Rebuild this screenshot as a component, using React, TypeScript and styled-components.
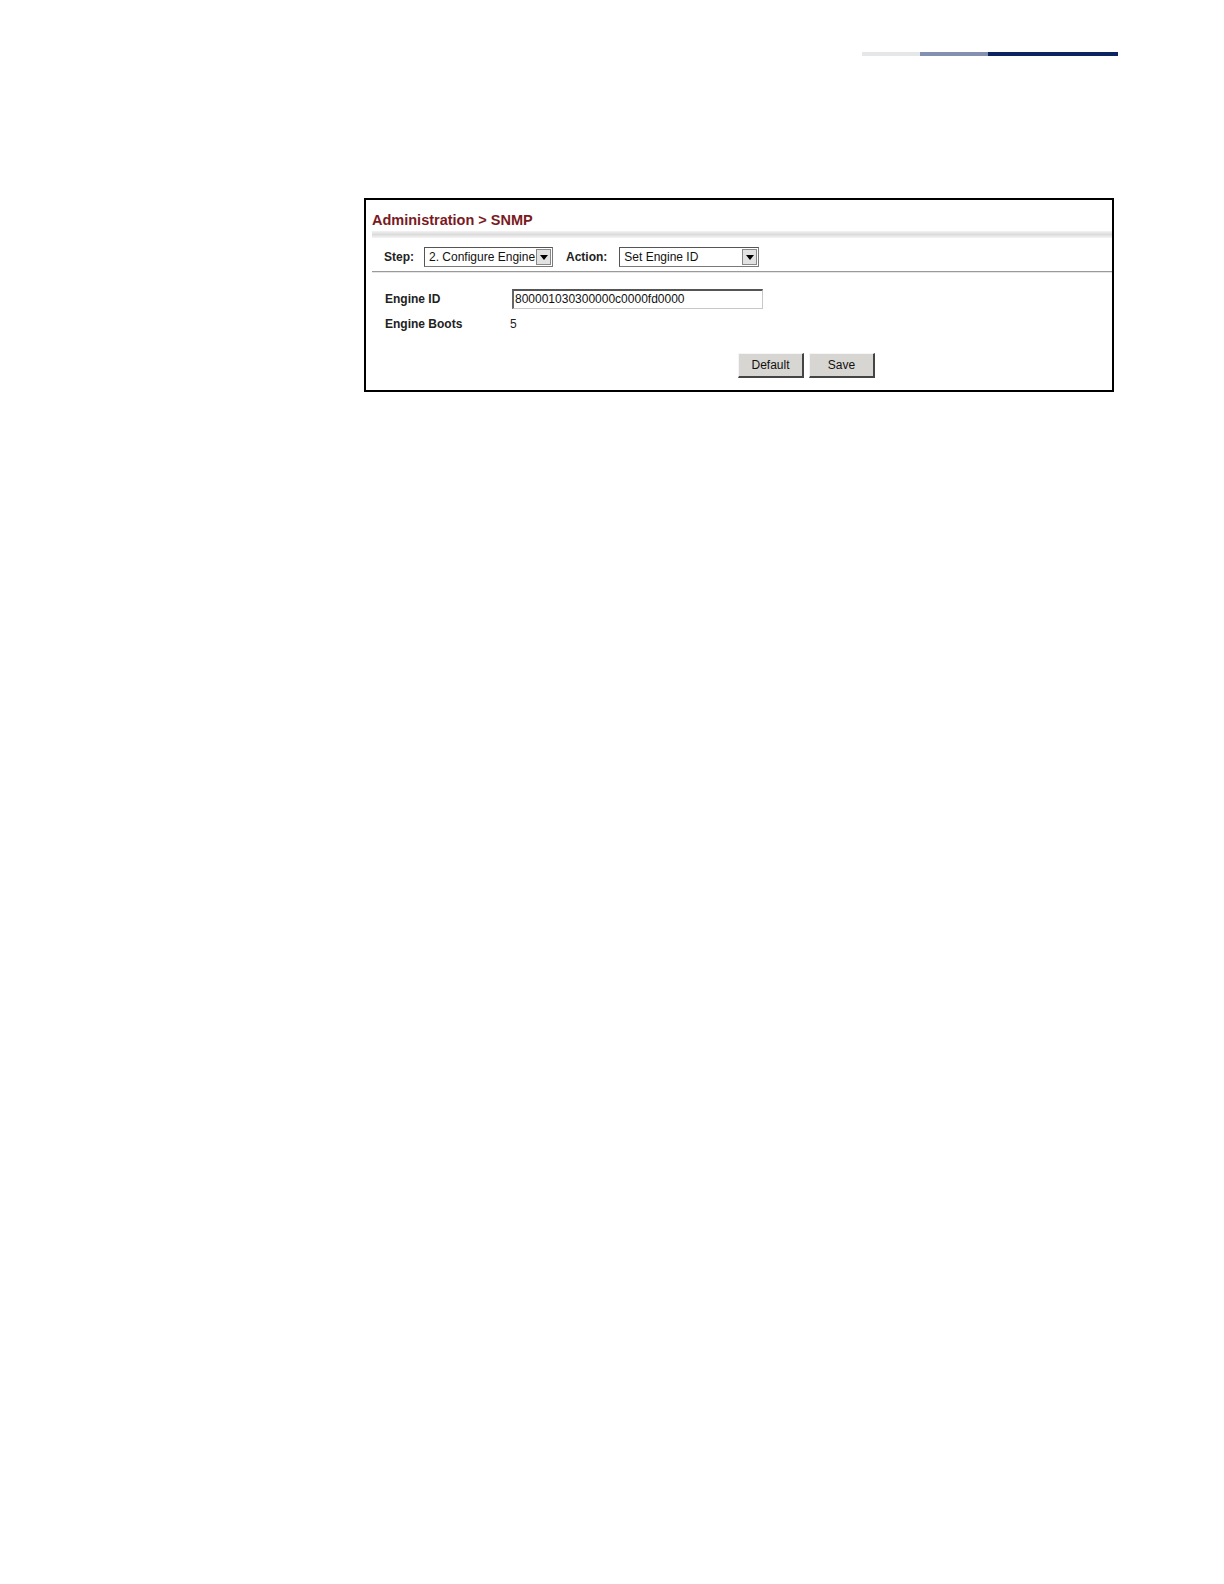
import styled, { createGlobalStyle } from "styled-components";

const Global = createGlobalStyle`
  html, body { margin: 0; padding: 0; background: #fff; overflow: hidden; }
  body { font-family: "Liberation Sans", Arial, sans-serif; }
`;

const Page = styled.div`
  background: #fff;
  padding-bottom: 40px;
`;

const HeaderBar = styled.div`
  display: flex;
  padding: 52px 0 0 862px;
`;

const BarSeg = styled.div<{ $w: number; $c: string }>`
  width: ${p => p.$w}px;
  height: 4px;
  background: ${p => p.$c};
`;

const Panel = styled.div`
  margin: 142px 0 0 364px;
  width: 746px;
  height: 190px;
  border: 2px solid #000;
  display: flex;
  flex-direction: column;
`;

const Title = styled.div`
  padding: 12px 0 0 6px;
  height: 19px;
  font-size: 14.5px;
  font-weight: bold;
  color: #7a1a1f;
`;

const Band = styled.div`
  margin-left: 6px;
  height: 7px;
  background: linear-gradient(#f2f2f2, #dcdcdc 50%, #f4f4f4);
`;

const Toolbar = styled.div`
  display: flex;
  align-items: center;
  height: 20px;
  margin-top: 9px;
  padding-left: 18px;
  font-size: 12px;
`;

const Label = styled.span<{ $gap?: number }>`
  font-weight: bold;
  color: #222;
  margin-right: ${p => p.$gap ?? 10}px;
`;

const Select = styled.div<{ $w: number }>`
  width: ${p => p.$w}px;
  height: 20px;
  box-sizing: border-box;
  border: 1px solid #7a7a7a;
  border-top-color: #555;
  border-left-color: #555;
  display: flex;
  align-items: center;
  padding-left: 4px;
  font-size: 12px;
  color: #111;
  margin-right: 13px;
  background: #fff;
`;

const SelectText = styled.span`
  flex: 1;
  white-space: nowrap;
  overflow: hidden;
`;

const Arrow = styled.div`
  width: 15px;
  height: 16px;
  margin-right: 1px;
  background: #e2e2e2;
  border: 1px solid #888;
  box-sizing: border-box;
  display: flex;
  align-items: center;
  justify-content: center;
  flex-shrink: 0;
`;

const Divider = styled.div`
  margin: 4px 0 0 6px;
  height: 1px;
  background: #9a9a9a;
  border-bottom: 1px solid #e6e6e6;
`;

const Form = styled.div`
  display: flex;
  flex-direction: column;
  padding: 15px 0 0 19px;
  font-size: 12px;
`;

const Row = styled.div<{ $h: number }>`
  display: flex;
  align-items: center;
  height: ${p => p.$h}px;
`;

const FieldLabel = styled.div`
  width: 127px;
  font-weight: bold;
  color: #222;
`;

const Input = styled.div`
  width: 251px;
  height: 20px;
  box-sizing: border-box;
  border: 1px solid #c8c8c8;
  border-top: 2px solid #555;
  border-left: 2px solid #666;
  padding-left: 1px;
  display: flex;
  align-items: center;
  font-size: 12px;
  color: #111;
`;

const Value = styled.div`
  margin-left: -2px;
  color: #222;
`;

const Buttons = styled.div`
  display: flex;
  gap: 5px;
  padding: 14px 0 0 372px;
`;

const Button = styled.div`
  width: 66px;
  height: 25px;
  box-sizing: border-box;
  background: #d8d6d2;
  border: 1px solid #f5f5f5;
  border-right: 2px solid #444;
  border-bottom: 2px solid #444;
  display: flex;
  align-items: center;
  justify-content: center;
  font-size: 12px;
  color: #111;
`;

const DownArrow = () => (
  <svg width="8" height="5" viewBox="0 0 8 5">
    <path d="M0 0 H8 L4 5 Z" fill="#000" />
  </svg>
);

export default function App() {
  return (
    <Page>
      <Global />
      <HeaderBar>
        <BarSeg $w={58} $c="#e6e7e9" />
        <BarSeg $w={68} $c="#8490b0" />
        <BarSeg $w={130} $c="#0c2460" />
      </HeaderBar>
      <Panel>
        <Title>Administration &gt; SNMP</Title>
        <Band />
        <Toolbar>
          <Label>Step:</Label>
          <Select $w={129}>
            <SelectText>2. Configure Engine</SelectText>
            <Arrow><DownArrow /></Arrow>
          </Select>
          <Label $gap={12}>Action:</Label>
          <Select $w={140}>
            <SelectText>Set Engine ID</SelectText>
            <Arrow><DownArrow /></Arrow>
          </Select>
        </Toolbar>
        <Divider />
        <Form>
          <Row $h={21}>
            <FieldLabel>Engine ID</FieldLabel>
            <Input>800001030300000c0000fd0000</Input>
          </Row>
          <Row $h={30}>
            <FieldLabel>Engine Boots</FieldLabel>
            <Value>5</Value>
          </Row>
        </Form>
        <Buttons>
          <Button>Default</Button>
          <Button>Save</Button>
        </Buttons>
      </Panel>
    </Page>
  );
}
